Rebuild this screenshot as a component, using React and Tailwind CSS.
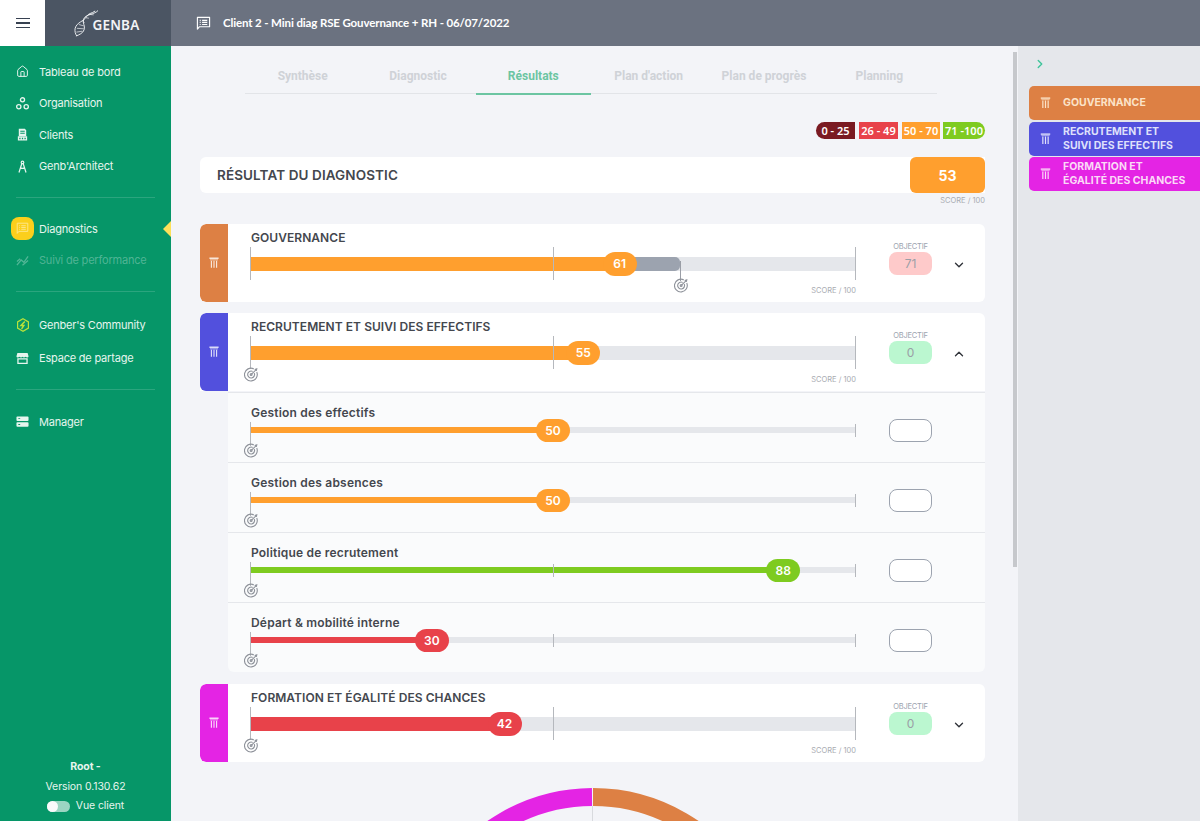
import { ChevronDown, ChevronUp, ChevronRight, Home } from 'lucide-react'

const Pillar = ({ className = '' }) => (
  <svg viewBox="0 0 12 14" className={className} fill="currentColor">
    <path d="M0.5 0.5h11v1.6h-11z" />
    <path d="M1.2 2.8h9.6v0.8h-9.6z" />
    <path d="M2.2 4.2h1.4v8.6h-1.4zM5.3 4.2h1.4v8.6h-1.4zM8.4 4.2h1.4v8.6h-1.4z" />
  </svg>
)

const TargetIcon = ({ className = '' }) => (
  <svg viewBox="0 0 16 16" className={className} fill="none" stroke="#8f939b" strokeWidth="1.2">
    <path d="M13.6 5.4A6.8 6.8 0 1 1 10.4 2" />
    <path d="M10.9 6.4A3.7 3.7 0 1 1 9.2 4.7" />
    <circle cx="7.6" cy="8" r="1" />
    <path d="M7.8 7.8L13 2.8M11.4 2.6l2.2-0.6-0.4 2.2" />
  </svg>
)

const SpeechLines = ({ className = '' }) => (
  <svg viewBox="0 0 16 16" className={className} fill="none" stroke="currentColor" strokeWidth="1.2">
    <path d="M1.5 1.5h13v10h-11l-2 2.5z" strokeLinejoin="round" />
    <path d="M4 4.6h1M6.5 4.6h5.5M4 6.8h1M6.5 6.8h5.5M4 9h1M6.5 9h5.5" />
  </svg>
)

const OrgIcon = ({ className = '' }) => (
  <svg viewBox="0 0 14 14" className={className} fill="none" stroke="currentColor" strokeWidth="1.4">
    <circle cx="7" cy="3" r="2.2" />
    <circle cx="3" cy="10.5" r="2.3" />
    <circle cx="11" cy="10.5" r="2.3" />
  </svg>
)

const ClientsIcon = ({ className = '' }) => (
  <svg viewBox="0 0 14 14" className={className} fill="currentColor">
    <path fillRule="evenodd" d="M3 0.8h6.5L11 2.5v6H3zM4.6 3v1h4.8V3zM4.6 5.2v1h4.8v-1z" />
    <path fillRule="evenodd" d="M2 9h10v4.5H2zM3.5 10.5v1.6h1.4v-1.6zM6.3 10.5v1.6h1.4v-1.6zM9.1 10.5v1.6h1.4v-1.6z" />
  </svg>
)

const CompassIcon = ({ className = '' }) => (
  <svg viewBox="0 0 14 14" className={className} fill="none" stroke="currentColor" strokeWidth="1.3">
    <circle cx="7" cy="2.6" r="1.4" />
    <path d="M6.2 4L3.2 13.5M7.8 4l3 9.5M4.6 8.5c1.6 0.7 3.2 0.7 4.8 0" />
  </svg>
)

const PerfIcon = ({ className = '' }) => (
  <svg viewBox="0 0 14 14" className={className} fill="none" stroke="currentColor" strokeWidth="1.4">
    <path d="M1 12L5.5 6.5l3 2.5L13 2.5" />
    <path d="M1 8l3.5-3M7 12l6-5" />
  </svg>
)

const HexIcon = ({ className = '' }) => (
  <svg viewBox="0 0 14 14" className={className} fill="none" stroke="#b9e23a" strokeWidth="1.2">
    <path d="M7 0.8l5.4 3.1v6.2L7 13.2 1.6 10.1V3.9z" />
    <path d="M8.8 3.5L5 7.5h2.8L5.6 10.8" strokeWidth="1.5" />
  </svg>
)

const StoreIcon = ({ className = '' }) => (
  <svg viewBox="0 0 14 14" className={className} fill="currentColor">
    <path d="M1.5 1h11l1 3.6c0 1.4-2 1.8-3.2 0.6C9.3 6.3 7.8 6.3 7 5.2 6.2 6.3 4.7 6.3 3.7 5.2 2.5 6.4 0.5 6 0.5 4.6z" />
    <path fillRule="evenodd" d="M1.4 6.8h11.2V13H1.4zM2.8 8.2v3.4h8.4V8.2z" />
  </svg>
)

const ManagerIcon = ({ className = '' }) => (
  <svg viewBox="0 0 14 14" className={className} fill="currentColor">
    <path fillRule="evenodd" d="M1.5 1.5h11a1 1 0 0 1 1 1v3a1 1 0 0 1-1 1h-11a1 1 0 0 1-1-1v-3a1 1 0 0 1 1-1zM2.5 3.4v1h2v-1z" />
    <path fillRule="evenodd" d="M1.5 7.7h11a1 1 0 0 1 1 1v3a1 1 0 0 1-1 1h-11a1 1 0 0 1-1-1v-3a1 1 0 0 1 1-1zM2.5 9.7v1h2v-1z" />
  </svg>
)

const Logo = () => (
  <svg viewBox="0 0 26 28" className="w-[25px] h-[27px] shrink-0" fill="none" stroke="#eef0f3" strokeWidth="1">
    <path d="M25 0.5C21 5 12 4 10 9.5 8.5 14 12 16 10.5 20.5 9.5 24 5 26 2 27" />
    <path d="M22 1C18 4 15 3 13 7 10 12 3 12.5 1.2 19c-0.6 3 0.2 6 1.8 8" />
    <path d="M15.5 4.5l5 0.5M12 8l3.5 0.5M9 11.5l2 2M5 15l5 1.5M3 19l7 0.5M2.5 23l6-1" strokeWidth="0.7" />
  </svg>
)

const iconCls = 'w-[13px] h-[13px]'

const NavItem = ({ label, icon, dim }) => (
  <div className={`flex items-center h-[31.5px] pl-[16px] ${dim ? 'text-white/30' : 'text-[#e6f5ee]'}`}>
    <span className="w-[23px] shrink-0">{icon}</span>
    <span className="text-[11px] tracking-[-0.2px] whitespace-nowrap">{label}</span>
  </div>
)

const Divider = () => <div className="mx-[16px] h-px bg-white/15" />

const Sidebar = () => (
  <aside className="relative w-[171px] shrink-0 bg-[#069668] flex flex-col font-['Inter',sans-serif]">
    <div className="pt-[10px] pb-[15px]">
      <NavItem label="Tableau de bord" icon={<Home className={iconCls} strokeWidth={1.8} />} />
      <NavItem label="Organisation" icon={<OrgIcon className={iconCls} />} />
      <NavItem label="Clients" icon={<ClientsIcon className={iconCls} />} />
      <NavItem label="Genb'Architect" icon={<CompassIcon className={iconCls} />} />
    </div>
    <Divider />
    <div className="pt-[15px] pb-[15px]">
      <div className="flex items-center h-[31.5px] pl-[11px] text-[#e6f5ee]">
        <span className="w-[23px] h-[23px] mr-[5px] rounded-[8px] bg-[#fbcf1c] flex items-center justify-center text-[#fde68a]">
          <SpeechLines className={iconCls} />
        </span>
        <span className="text-[11px] tracking-[-0.2px]">Diagnostics</span>
      </div>
      <NavItem label="Suivi de performance" dim icon={<PerfIcon className={iconCls} />} />
    </div>
    <Divider />
    <div className="pt-[17px] pb-[15px]">
      <NavItem label="Genber's Community" icon={<HexIcon className="w-[14px] h-[14px]" />} />
      <div className="mt-[2px]">
        <NavItem label="Espace de partage" icon={<StoreIcon className={iconCls} />} />
      </div>
    </div>
    <Divider />
    <div className="pt-[16px]">
      <NavItem label="Manager" icon={<ManagerIcon className={iconCls} />} />
    </div>
    <div className="mt-auto pb-[5px] flex flex-col items-center text-[#e6f5ee] text-[10.5px] tracking-[-0.1px]">
      <div className="h-[20px] leading-[20px] font-bold mt-[1px]">Root -</div>
      <div className="h-[19px] leading-[19px]">Version 0.130.62</div>
      <div className="h-[20px] flex items-center gap-[6px]">
        <span className="w-[23px] h-[11px] rounded-full bg-white/60 flex items-center">
          <span className="w-[11px] h-[11px] rounded-full bg-[#f9fafb]" />
        </span>
        Vue client
      </div>
    </div>
    <span className="absolute right-0 top-[175px] w-0 h-0 border-y-[8px] border-y-transparent border-r-[8px] border-r-[#fde05a]" />
  </aside>
)

const tabs = ['Synthèse', 'Diagnostic', 'Résultats', "Plan d'action", 'Plan de progrès', 'Planning']

const Tabs = () => (
  <div className="ml-[45px] w-[692px] flex h-[48px] border-b-[1.5px] border-[#e2e4e8] font-['Roboto',sans-serif]">
    {tabs.map((t) => (
      <div
        key={t}
        className={`flex-1 pt-[21px] text-center text-[12px] font-bold -mb-[1.5px] ${
          t === 'Résultats' ? 'text-[#6cc5a2] border-b-[2px] border-[#6cc5a2]' : 'text-[#cfd2d7]'
        }`}
      >
        {t}
      </div>
    ))}
  </div>
)

const Legend = () => (
  <div className="mt-[28px] flex justify-end gap-[4px] text-white text-[11px] font-semibold leading-[17px] font-['Noto_Sans',sans-serif]">
    <span className="w-[39px] text-center bg-[#7a1a22] rounded-l-full whitespace-nowrap">0 - 25</span>
    <span className="w-[39px] text-center bg-[#e8424a] whitespace-nowrap">26 - 49</span>
    <span className="w-[38px] text-center bg-[#ff9f2e] whitespace-nowrap mr-[-1px]">50 - 70</span>
    <span className="w-[42px] text-center bg-[#7ecb20] rounded-r-full whitespace-nowrap">71 -100</span>
  </div>
)

const ScoreBar = ({ score, target, color, thin }) => {
  const left = (v) => `${(v / 100) * 606}px`
  const barH = thin ? 'h-[6px] top-[5px]' : 'h-[14px] top-[10px]'
  const midTick = thin ? 'top-[2px] h-[13px]' : 'top-0 h-[33px]'
  const pill = thin ? 'top-[-3px] h-[23px]' : 'top-[5px] h-[24px]'
  return (
    <div className="relative w-[606px] h-[33px]">
      <div className={`absolute inset-x-0 bg-[#e5e7eb] ${barH}`} />
      {target > score && (
        <div className={`absolute bg-[#9ca3af] rounded-r-[5px] ${barH}`} style={{ left: left(score), width: left(target - score) }} />
      )}
      <div className={`absolute left-0 ${barH}`} style={{ width: left(score), backgroundColor: color }} />
      <div className={`absolute left-0 w-px bg-[#b5b8bd] ${thin ? 'top-0 h-[24px]' : 'top-0 h-[33px]'}`} />
      <div className={`absolute left-[303px] w-px bg-[#b5b8bd] ${midTick}`} />
      <div className={`absolute right-0 w-px bg-[#b5b8bd] ${midTick}`} />
      <div
        className={`absolute w-[34px] -ml-[17px] rounded-full flex items-center justify-center text-white text-[12px] font-semibold ${pill}`}
        style={{ left: left(score), backgroundColor: color }}
      >
        {score}
      </div>
      {target > 0 && <div className="absolute w-px top-[14px] h-[20px] bg-[#9a9ea6]" style={{ left: left(target) }} />}
      <span
        className={`absolute w-[15px] h-[15px] -ml-[6px] ${thin ? 'top-[21px]' : 'top-[31px]'}`}
        style={{ left: left(target) }}
      >
        <TargetIcon className="w-[15px] h-[15px]" />
      </span>
    </div>
  )
}

const Objective = ({ value, bg }) => (
  <div className="absolute left-[661px] top-[18px] w-[43px] flex flex-col items-center">
    <span className="text-[7.5px] leading-[10px] text-[#9ca3af] tracking-[-0.2px]">OBJECTIF</span>
    <span className={`w-[43px] h-[23px] rounded-[8px] flex items-center justify-center text-[12px] text-[#9a9ea6] ${bg}`}>{value}</span>
  </div>
)

const AxisCard = ({ color, title, score, barColor, target, objective, objBg, open }) => (
  <div className="flex h-[78px] bg-white">
    <div className="w-[28px] shrink-0 rounded-l-[6px] flex items-center justify-center text-white/80" style={{ backgroundColor: color }}>
      <Pillar className="w-[10px] h-[12px]" />
    </div>
    <div className="relative flex-1 pl-[22px] pt-[7px]">
      <div className="text-[12px] leading-[13px] font-semibold text-[#44474e] tracking-[0.05px] ml-[1px] mb-[3px]">{title}</div>
      <ScoreBar score={score} target={target} color={barColor} />
      <div className="w-[606px] text-right text-[7.5px] leading-[10px] mt-[6px] text-[#a8abb1]">SCORE / 100</div>
      <Objective value={objective} bg={objBg} />
      <span className="absolute left-[724px] top-[34px] text-[#33363c]">
        {open ? <ChevronUp className="w-[14px] h-[14px]" strokeWidth={2.4} /> : <ChevronDown className="w-[14px] h-[14px]" strokeWidth={2.4} />}
      </span>
    </div>
  </div>
)

const subRows = [
  { title: 'Gestion des effectifs', score: 50, color: '#ff9f2e' },
  { title: 'Gestion des absences', score: 50, color: '#ff9f2e' },
  { title: 'Politique de recrutement', score: 88, color: '#7ecb20' },
  { title: 'Départ & mobilité interne', score: 30, color: '#e8424a' },
]

const SubRow = ({ title, score, color }) => (
  <div className="relative h-[70px] pl-[22px] pt-[13px] border-t border-[#e5e7eb] bg-[#fafbfc]">
    <div className="text-[12px] leading-[14px] font-semibold text-[#44474e] tracking-[0.2px] ml-[1px] mb-[2px]">{title}</div>
    <ScoreBar score={score} target={0} color={color} thin />
    <span className="absolute left-[661px] top-[26px] w-[43px] h-[23px] rounded-[8px] border-[1.5px] border-[#9ca3af] bg-white" />
  </div>
)

const Donut = () => (
  <svg viewBox="0 0 372 372" className="w-[372px] h-[372px] mt-[26px] ml-[207px] shrink-0" fill="none">
    <path d="M186 9 A177 177 0 0 1 340 99" stroke="#dd8044" strokeWidth="18" />
    <path d="M185 9 A177 177 0 0 0 32 99" stroke="#e424e4" strokeWidth="18" />
    <path d="M185.5 18V186" stroke="#d8dade" strokeWidth="1" />
  </svg>
)

const sideItems = [
  { color: '#dd8044', text: ['GOUVERNANCE'], tint: 'text-[#fbe3c8]' },
  { color: '#5250dd', text: ['RECRUTEMENT ET', 'SUIVI DES EFFECTIFS'], tint: 'text-[#dfe0fb]' },
  { color: '#e424e4', text: ['FORMATION ET', 'ÉGALITÉ DES CHANCES'], tint: 'text-[#fbd9f7]' },
]

const RightPanel = () => (
  <aside className="w-[182px] shrink-0 bg-[#e5e7eb] font-['Inter',sans-serif] pl-[11px]">
    <div className="h-[40px] pt-[11px] text-[#3ec49a]">
      <ChevronRight className="w-[14px] h-[14px] ml-[4px]" strokeWidth={2.4} />
    </div>
    <div className="flex flex-col gap-[1.5px]">
      {sideItems.map((s) => (
        <div key={s.text[0]} className={`h-[34px] rounded-l-[5px] flex items-center ${s.tint}`} style={{ backgroundColor: s.color }}>
          <Pillar className="w-[11px] h-[12px] ml-[11px] mr-[12px] shrink-0" />
          <div className="text-[10.5px] leading-[14px] font-bold whitespace-nowrap">
            {s.text.map((l) => (
              <div key={l}>{l}</div>
            ))}
          </div>
        </div>
      ))}
    </div>
  </aside>
)

const App = () => (
  <div className="h-[821px] w-[1200px] overflow-hidden flex flex-col">
    <header className="h-[46px] shrink-0 flex">
      <div className="w-[45px] bg-white flex items-center justify-center">
        <div className="w-[14px] flex flex-col gap-[3px]">
          <span className="h-[1.5px] bg-[#374151]" />
          <span className="h-[1.5px] bg-[#374151]" />
          <span className="h-[1.5px] bg-[#374151]" />
        </div>
      </div>
      <div className="w-[126px] bg-[#4b5563] flex items-center justify-center pr-[2px] text-[#f3f4f6] font-['Noto_Sans',sans-serif]">
        <Logo />
        <span className="text-[13.5px] font-semibold tracking-[0.2px] -ml-[7px] mt-[5px]">GENBA</span>
      </div>
      <div className="flex-1 bg-[#6b7280] flex items-center pl-[25px] text-white font-['Lato',sans-serif]">
        <SpeechLines className="w-[15px] h-[15px] mr-[12px]" />
        <span className="text-[11.5px] font-bold tracking-[-0.13px]">Client 2 - Mini diag RSE Gouvernance + RH - 06/07/2022</span>
      </div>
    </header>
    <div className="flex-1 flex min-h-0">
      <Sidebar />
      <main className="relative w-[847px] shrink-0 bg-[#f3f4f8] overflow-hidden font-['Inter',sans-serif]">
        <div className="absolute right-[1px] top-[6px] w-[4px] h-[515px] bg-[#c6c8cc]" />
        <div className="w-[814px] pl-[29px]">
          <Tabs />
          <Legend />
          <div className="mt-[18px] h-[36px] flex bg-white rounded-l-[6px]">
            <div className="flex-1 pl-[17px] flex items-center text-[13.5px] font-semibold tracking-[0.1px] text-[#44474e]">RÉSULTAT DU DIAGNOSTIC</div>
            <div className="w-[75px] rounded-[6px] bg-[#ff9f2e] flex items-center justify-center text-white text-[14px] font-bold">53</div>
          </div>
          <div className="h-[31px] pt-[3px] text-right text-[7.5px] leading-[10px] text-[#a8abb1]">SCORE / 100</div>
          <div className="rounded-[6px] overflow-hidden">
            <AxisCard color="#dd8044" title="GOUVERNANCE" score={61} barColor="#ff9f2e" target={71} objective={71} objBg="bg-[#fecaca]" />
          </div>
          <div className="mt-[11px]">
            <div className="rounded-t-[6px] overflow-hidden">
              <AxisCard color="#5250dd" title="RECRUTEMENT ET SUIVI DES EFFECTIFS" score={55} barColor="#ff9f2e" target={0} objective={0} objBg="bg-[#bbf7d0]" open />
            </div>
            <div className="ml-[28px] h-px" />
            <div className="ml-[28px] rounded-b-[6px] overflow-hidden">
              {subRows.map((r) => (
                <SubRow key={r.title} {...r} />
              ))}
            </div>
          </div>
          <div className="mt-[12px] rounded-[6px] overflow-hidden">
            <AxisCard color="#e424e4" title="FORMATION ET ÉGALITÉ DES CHANCES" score={42} barColor="#e8424a" target={0} objective={0} objBg="bg-[#bbf7d0]" />
          </div>
          <Donut />
        </div>
      </main>
      <RightPanel />
    </div>
  </div>
)

export default App
